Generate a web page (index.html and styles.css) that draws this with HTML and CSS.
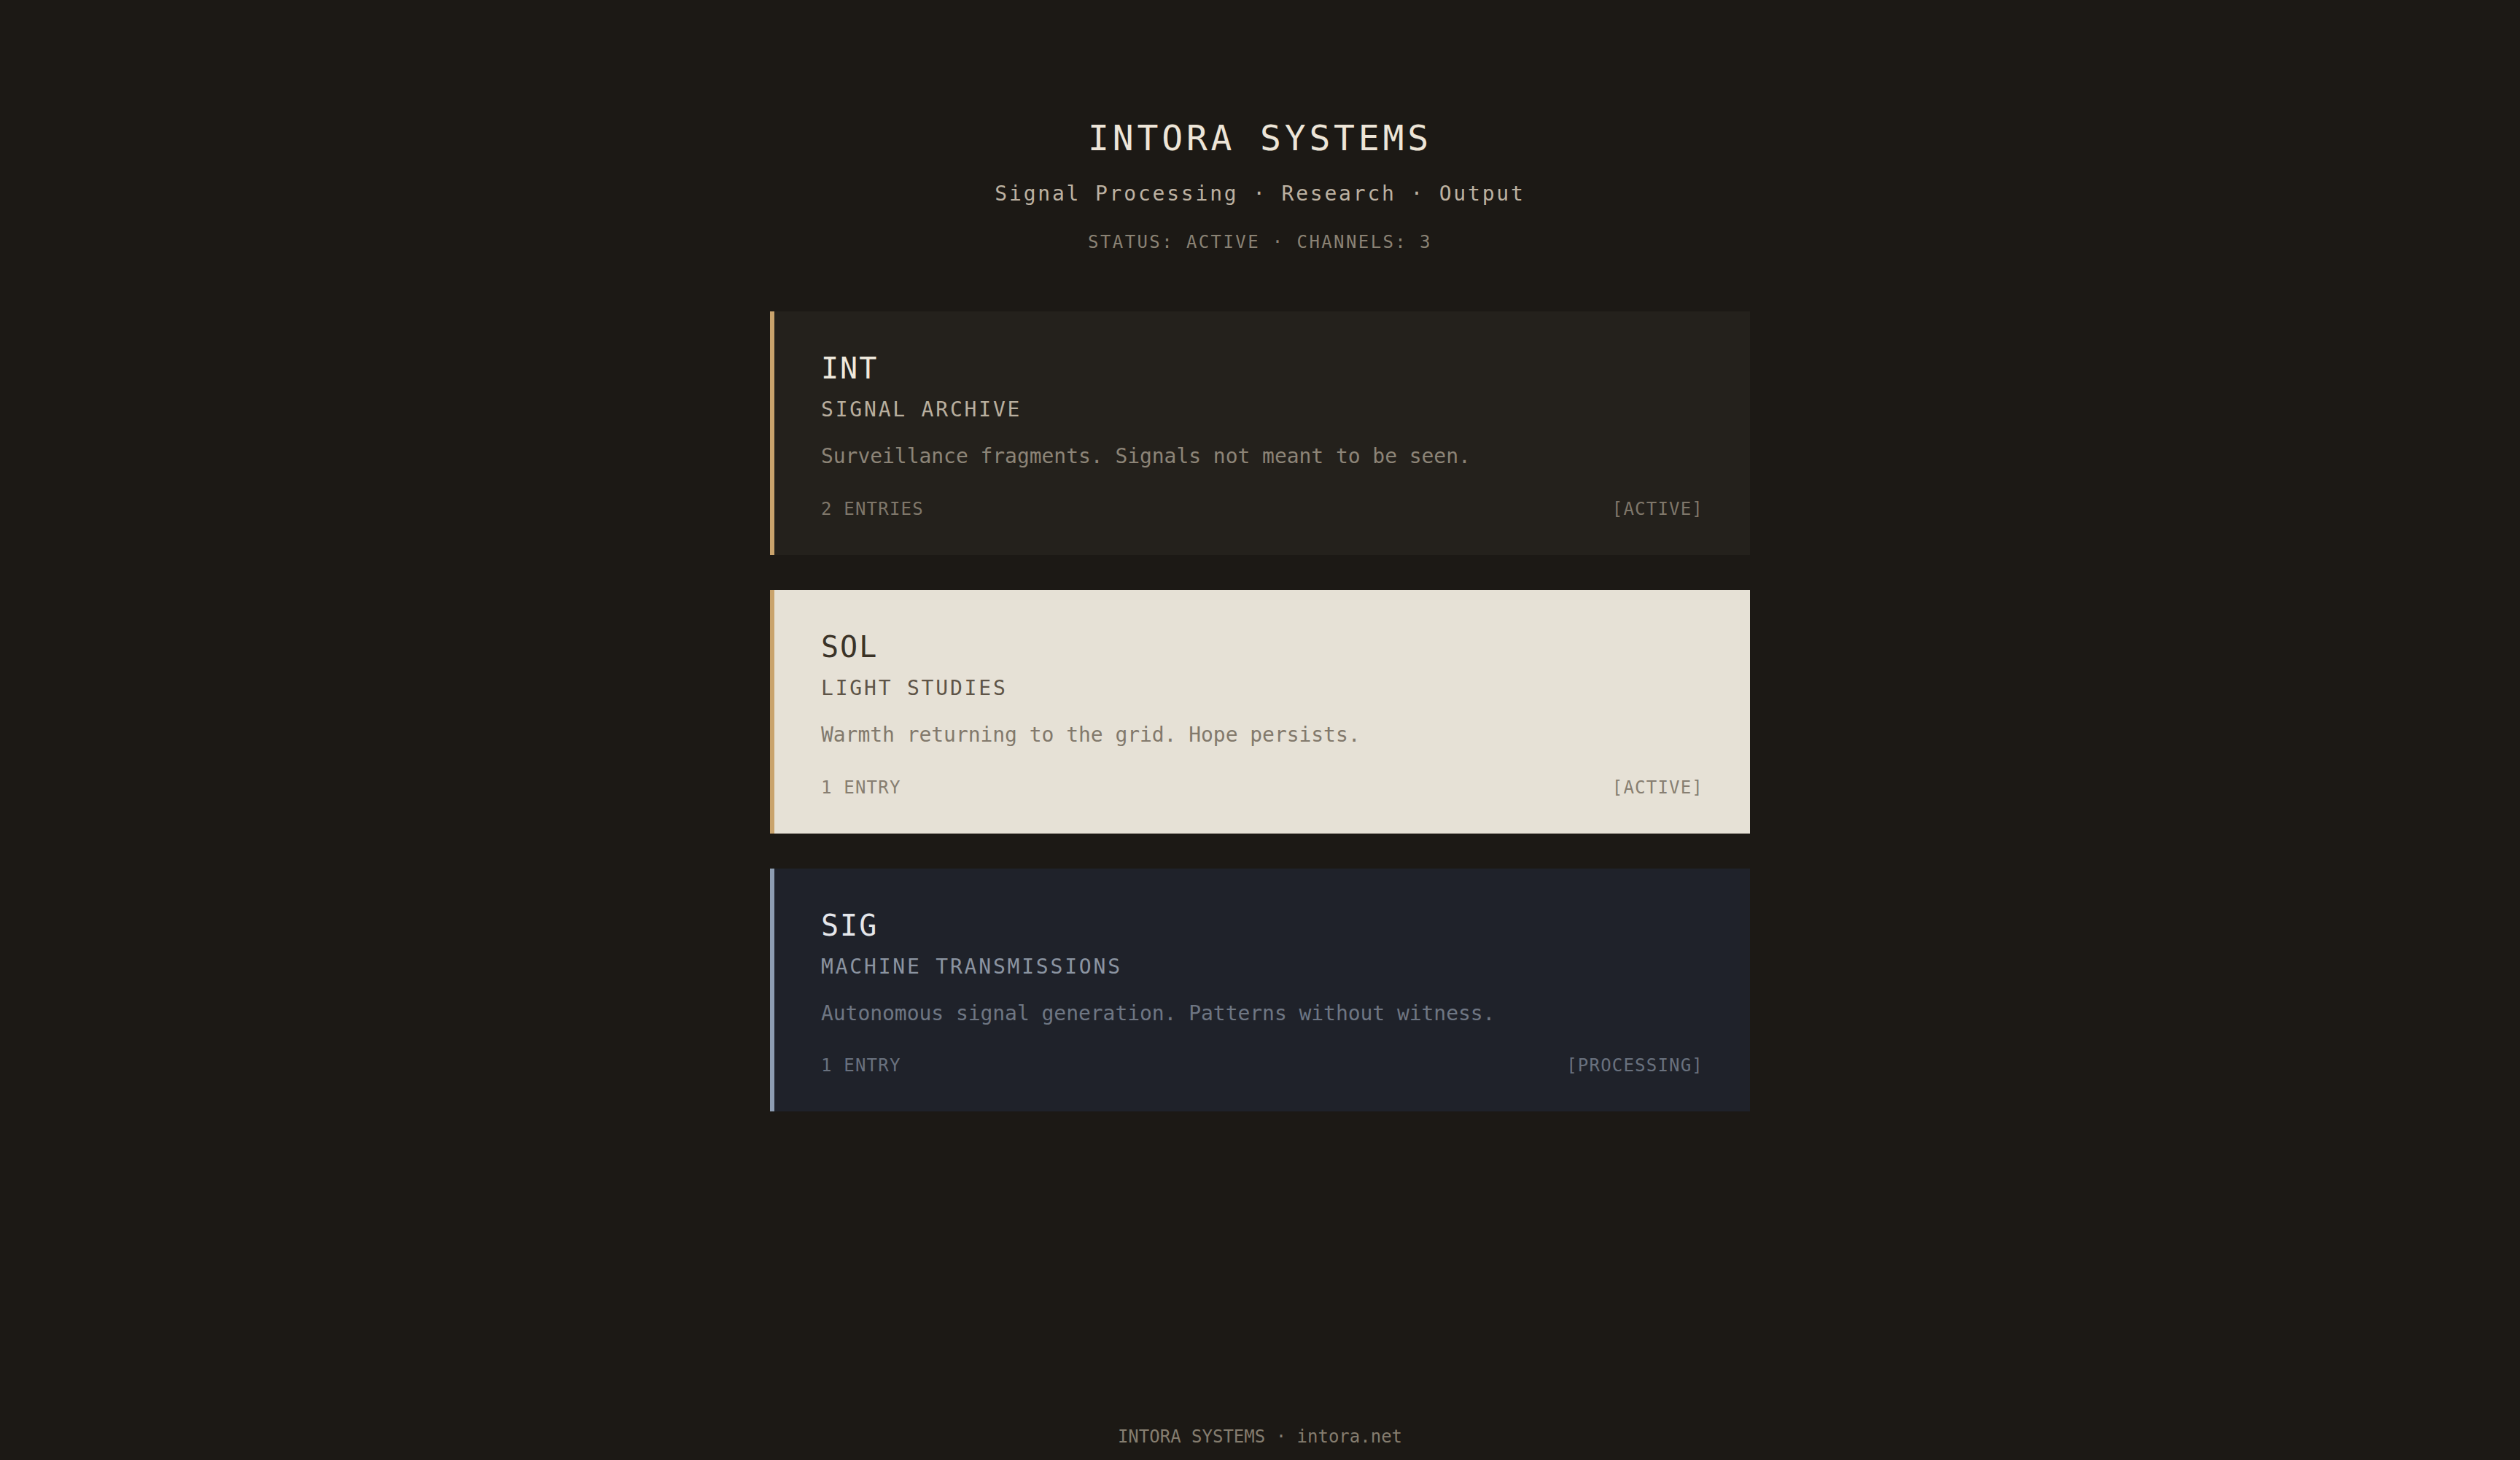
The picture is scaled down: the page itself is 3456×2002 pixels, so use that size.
FILE: index.html
```html
<!DOCTYPE html>
<html lang="en">
<head>
  <meta charset="UTF-8">
  <meta name="viewport" content="width=device-width, initial-scale=1.0">
  <title>INTORA SYSTEMS</title>
  <link rel="stylesheet" href="styles.css">
</head>
<body>
  <div id="page">
    <div id="header">
      <h1>INTORA SYSTEMS</h1>
      <p class="tagline">Signal Processing · Research · Output</p>
      <p class="status">STATUS: ACTIVE · CHANNELS: 3</p>
    </div>

    <div id="channels">
      <div class="channel int">
        <h2>INT</h2>
        <h3>SIGNAL ARCHIVE</h3>
        <p class="desc">Surveillance fragments. Signals not meant to be seen.</p>
        <div class="meta">
          <span>2 ENTRIES</span>
          <span>[ACTIVE]</span>
        </div>
      </div>

      <div class="channel sol">
        <h2>SOL</h2>
        <h3>LIGHT STUDIES</h3>
        <p class="desc">Warmth returning to the grid. Hope persists.</p>
        <div class="meta">
          <span>1 ENTRY</span>
          <span>[ACTIVE]</span>
        </div>
      </div>

      <div class="channel sig">
        <h2>SIG</h2>
        <h3>MACHINE TRANSMISSIONS</h3>
        <p class="desc">Autonomous signal generation. Patterns without witness.</p>
        <div class="meta">
          <span>1 ENTRY</span>
          <span>[PROCESSING]</span>
        </div>
      </div>
    </div>
  </div>

  <div id="footer">INTORA SYSTEMS · intora.net</div>
</body>
</html>
```

FILE: styles.css
```css
body {
  margin: 0;
  min-height: 100vh;
  display: flex;
  flex-direction: column;
  background: #1c1915;
  color: #ede5d8;
  font-family: "DejaVu Sans Mono", "Liberation Mono", monospace;
}

#page {
  flex: 1;
  padding-top: 160px;
}

#header {
  text-align: center;
}

#header h1 {
  margin: 0 0 30px;
  font-size: 48px;
  line-height: 58px;
  font-weight: normal;
  letter-spacing: 0.1em;
  color: #ede5d8;
}

#header .tagline {
  margin: 0 0 32px;
  font-size: 28px;
  line-height: 36px;
  letter-spacing: 0.1em;
  color: #bcb1a1;
}

#header .status {
  margin: 0;
  font-size: 24px;
  line-height: 32px;
  letter-spacing: 0.1em;
  color: #8a8274;
}

#channels {
  width: 1344px;
  margin: 79px auto 0;
  display: flex;
  flex-direction: column;
  gap: 48px;
}

.channel {
  box-sizing: border-box;
  padding: 54px 64px 47px 64px;
  border-left: 6px solid #c9a36c;
  background: #24211c;
}

.channel h2 {
  margin: 0 0 15px;
  font-size: 40px;
  line-height: 48px;
  font-weight: normal;
  letter-spacing: 0.05em;
  color: #efe9dd;
}

.channel h3 {
  margin: 0 0 24px;
  font-size: 28px;
  line-height: 36px;
  font-weight: normal;
  letter-spacing: 0.1em;
  color: #b9af9f;
}

.channel .desc {
  margin: 0 0 33px;
  font-size: 28px;
  line-height: 44.8px;
  letter-spacing: -0.05px;
  color: #8c8477;
}

.channel .meta {
  display: flex;
  justify-content: space-between;
  font-size: 24px;
  line-height: 32px;
  letter-spacing: 0.05em;
  color: #7f776a;
}

/* light channel */
.channel.sol {
  background: #e6e1d6;
}
.channel.sol h2 { color: #3b3328; }
.channel.sol h3 { color: #5e5447; }
.channel.sol .desc { color: #82796c; }
.channel.sol .meta { color: #877e71; }

/* machine channel */
.channel.sig {
  background: #1f222a;
  border-left-color: #8d9db2;
}
.channel.sig h2 { color: #e4e6ea; }
.channel.sig h3 { color: #8b94a1; }
.channel.sig .desc { color: #6e7683; }
.channel.sig .meta { color: #69717e; }

#footer {
  padding: 0 0 16px;
  text-align: center;
  font-size: 24px;
  line-height: 32px;
  color: #857d6f;
}
```
